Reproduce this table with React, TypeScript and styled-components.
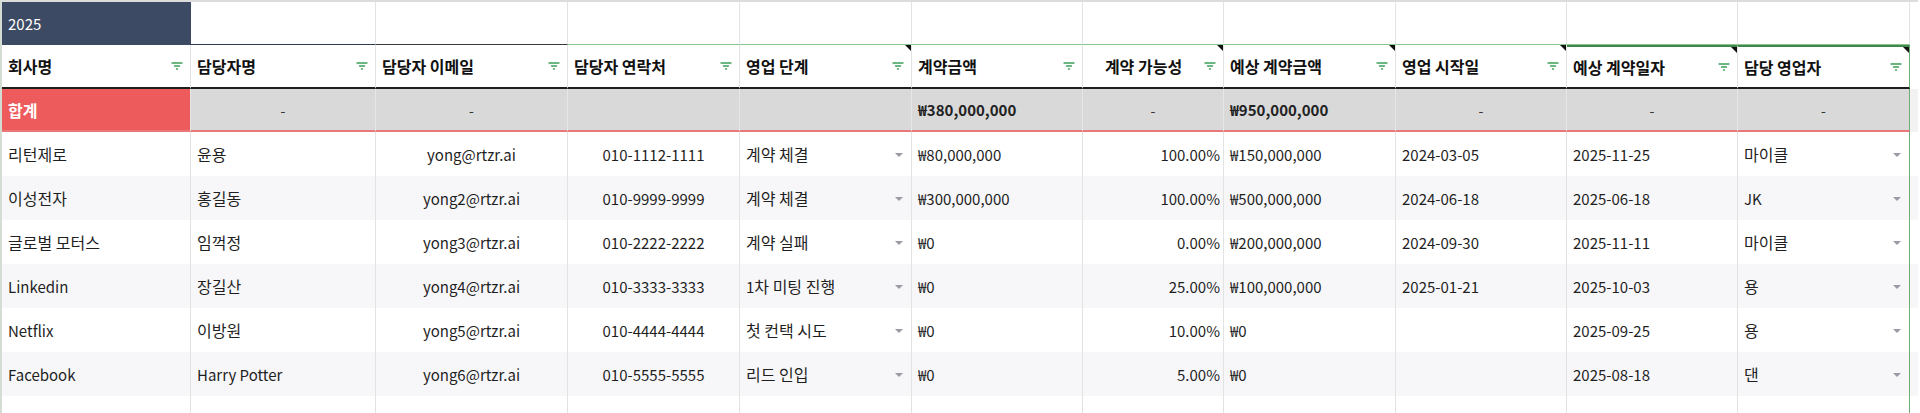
import styled, { createGlobalStyle } from "styled-components";

const GlobalStyle = createGlobalStyle`
    html, body {
        margin: 0;
        padding: 0;
        background: #ffffff;
    }
    body {
        font-family: "Noto Sans CJK KR", "Noto Sans", sans-serif;
        color: #1f1f1f;
        height: 413px;
        overflow: hidden;
    }
`;

const COLS = "189px 185px 192px 172px 172px 171px 141px 172px 171px 171px 172px 1fr";

const Sheet = styled.div`
    border-top: 2px solid #dcdcdc;
    border-left: 2px solid #d3ddd3;
    width: 1918px;
    box-sizing: border-box;
`;

const Row = styled.div<{ $height: number; $alt?: boolean }>`
    display: grid;
    grid-template-columns: ${COLS};
    height: ${props => props.$height}px;
    background: ${props => (props.$alt ? "#f7f7f9" : "#ffffff")};
`;

const Cell = styled.div<{ $align?: "left" | "center" | "right"; $edge?: boolean }>`
    box-sizing: border-box;
    display: flex;
    align-items: center;
    justify-content: ${props =>
        props.$align === "center" ? "center" : props.$align === "right" ? "flex-end" : "flex-start"};
    padding: 0 6px;
    border-right: 1px solid ${props => (props.$edge ? "#6fae73" : "#e3e3e3")};
    font-size: 15px;
    white-space: nowrap;
    overflow: hidden;
    position: relative;
`;

// hangul is set a touch larger than the latin text, as in the sheet
const Hangul = styled.span`
    font-size: 16px;
`;

const YearCell = styled(Cell)`
    background: #3d4a63;
    color: #ffffff;
    border-right: 1px solid #3d4a63;
`;

const BlankCell = styled(Cell)<{ $line: string }>`
    border-bottom: 1px solid ${props => props.$line};
`;

const HeadCell = styled(Cell)<{ $strong?: boolean }>`
    font-weight: 700;
    color: #111111;
    border-bottom: 2px solid #1d1d1d;
    border-top: ${props => (props.$strong ? "2px solid #3f8a4a" : "none")};
    padding-right: 7px;
    justify-content: space-between;
    gap: 6px;
`;

const HeadLabel = styled.span<{ $center?: boolean }>`
    flex: 1;
    text-align: ${props => (props.$center ? "center" : "left")};
`;

const Note = styled.span`
    position: absolute;
    top: 0;
    right: 0;
    width: 0;
    height: 0;
    border-top: 6px solid #111111;
    border-left: 6px solid transparent;
`;

const TotalCell = styled(Cell)<{ $red?: boolean }>`
    background: ${props => (props.$red ? "#ee5b5c" : "#d9d9d9")};
    color: ${props => (props.$red ? "#ffffff" : "#222222")};
    border-bottom: 2px solid #e8787a;
    border-right-color: ${props => (props.$edge ? "#6fae73" : "#e6e6e6")};
`;

const Strong = styled.span`
    font-weight: 700;
`;

const Dash = styled.span`
    font-size: 14px;
    color: #333333;
`;

const Filler = styled.div<{ $tone?: string }>`
    background: ${props => props.$tone || "transparent"};
`;

const SelectCell = styled(Cell)`
    justify-content: space-between;
    padding-right: 8px;
`;

const Caret = styled.span`
    width: 0;
    height: 0;
    border-left: 4px solid transparent;
    border-right: 4px solid transparent;
    border-top: 4px solid #9a9aa6;
    margin-top: 2px;
`;

function Txt({ children }: { children: string }) {
    const parts = children.split(/([\uac00-\ud7a3\u3131-\u318e]+(?:\s[\uac00-\ud7a3\u3131-\u318e]+)*)/);
    return (
        <span>
            {parts.map((p, i) => (i % 2 === 1 ? <Hangul key={i}>{p}</Hangul> : p))}
        </span>
    );
}

function FilterIcon() {
    return (
        <svg width="12" height="8" viewBox="0 0 12 8" style={{ flexShrink: 0 }}>
            <g stroke="#3c9e58" strokeWidth="1.3" strokeLinecap="round">
                <line x1="1" y1="1" x2="11" y2="1" />
                <line x1="3.5" y1="4" x2="8.5" y2="4" />
                <line x1="5.5" y1="7" x2="6.5" y2="7" />
            </g>
        </svg>
    );
}

interface IHeader {
    label: string;
    note?: boolean;
    center?: boolean;
    strong?: boolean;
}

const headers: IHeader[] = [
    { label: "회사명" },
    { label: "담당자명" },
    { label: "담당자 이메일" },
    { label: "담당자 연락처" },
    { label: "영업 단계", note: true },
    { label: "계약금액" },
    { label: "계약 가능성", note: true, center: true },
    { label: "예상 계약금액", note: true },
    { label: "영업 시작일", note: true },
    { label: "예상 계약일자", note: true, strong: true },
    { label: "담당 영업자", note: true, strong: true },
];

interface IDeal {
    company: string;
    contact: string;
    email: string;
    phone: string;
    stage: string;
    amount: string;
    chance: string;
    expected: string;
    start: string;
    close: string;
    owner: string;
}

const deals: IDeal[] = [
    { company: "리턴제로", contact: "윤용", email: "yong@rtzr.ai", phone: "010-1112-1111", stage: "계약 체결", amount: "₩80,000,000", chance: "100.00%", expected: "₩150,000,000", start: "2024-03-05", close: "2025-11-25", owner: "마이클" },
    { company: "이성전자", contact: "홍길동", email: "yong2@rtzr.ai", phone: "010-9999-9999", stage: "계약 체결", amount: "₩300,000,000", chance: "100.00%", expected: "₩500,000,000", start: "2024-06-18", close: "2025-06-18", owner: "JK" },
    { company: "글로벌 모터스", contact: "임꺽정", email: "yong3@rtzr.ai", phone: "010-2222-2222", stage: "계약 실패", amount: "₩0", chance: "0.00%", expected: "₩200,000,000", start: "2024-09-30", close: "2025-11-11", owner: "마이클" },
    { company: "Linkedin", contact: "장길산", email: "yong4@rtzr.ai", phone: "010-3333-3333", stage: "1차 미팅 진행", amount: "₩0", chance: "25.00%", expected: "₩100,000,000", start: "2025-01-21", close: "2025-10-03", owner: "용" },
    { company: "Netflix", contact: "이방원", email: "yong5@rtzr.ai", phone: "010-4444-4444", stage: "첫 컨택 시도", amount: "₩0", chance: "10.00%", expected: "₩0", start: "", close: "2025-09-25", owner: "용" },
    { company: "Facebook", contact: "Harry Potter", email: "yong6@rtzr.ai", phone: "010-5555-5555", stage: "리드 인입", amount: "₩0", chance: "5.00%", expected: "₩0", start: "", close: "2025-08-18", owner: "댄" },
];

const blankLines = ["#2e3a4f", "#3a3a3a", "#8cc48f", "#8cc48f", "#8cc48f", "#8cc48f", "#8cc48f", "#8cc48f", "#8cc48f", "#8cc48f"];

function App() {
    return (
        <>
            <GlobalStyle />
            <Sheet>
                <Row $height={43}>
                    <YearCell>2025</YearCell>
                    {blankLines.map((line, i) => (
                        <BlankCell key={i} $line={line} />
                    ))}
                    <Filler />
                </Row>

                <Row $height={44}>
                    {headers.map((h, i) => (
                        <HeadCell key={h.label} $strong={h.strong} $edge={i === headers.length - 1}>
                            <HeadLabel $center={h.center}><Hangul>{h.label}</Hangul></HeadLabel>
                            <FilterIcon />
                            {h.note && <Note />}
                        </HeadCell>
                    ))}
                    <Filler />
                </Row>

                <Row $height={43}>
                    <TotalCell $red><Strong><Hangul>합계</Hangul></Strong></TotalCell>
                    <TotalCell $align="center"><Dash>-</Dash></TotalCell>
                    <TotalCell $align="center"><Dash>-</Dash></TotalCell>
                    <TotalCell />
                    <TotalCell />
                    <TotalCell><Strong>₩380,000,000</Strong></TotalCell>
                    <TotalCell $align="center"><Dash>-</Dash></TotalCell>
                    <TotalCell><Strong>₩950,000,000</Strong></TotalCell>
                    <TotalCell $align="center"><Dash>-</Dash></TotalCell>
                    <TotalCell $align="center"><Dash>-</Dash></TotalCell>
                    <TotalCell $align="center" $edge><Dash>-</Dash></TotalCell>
                    <Filler $tone="#f2f2f2" />
                </Row>

                {deals.map((d, i) => (
                    <Row key={d.email} $height={44} $alt={i % 2 === 1}>
                        <Cell><Txt>{d.company}</Txt></Cell>
                        <Cell><Txt>{d.contact}</Txt></Cell>
                        <Cell $align="center">{d.email}</Cell>
                        <Cell $align="center">{d.phone}</Cell>
                        <SelectCell><Txt>{d.stage}</Txt><Caret /></SelectCell>
                        <Cell>{d.amount}</Cell>
                        <Cell $align="right" style={{ paddingRight: 3 }}>{d.chance}</Cell>
                        <Cell>{d.expected}</Cell>
                        <Cell>{d.start}</Cell>
                        <Cell>{d.close}</Cell>
                        <SelectCell $edge><Txt>{d.owner}</Txt><Caret /></SelectCell>
                        <Filler />
                    </Row>
                ))}

                <Row $height={44}>
                    {headers.map((h, i) => (
                        <Cell key={h.label} $edge={i === headers.length - 1} />
                    ))}
                    <Filler />
                </Row>
            </Sheet>
        </>
    );
}

export default App;
